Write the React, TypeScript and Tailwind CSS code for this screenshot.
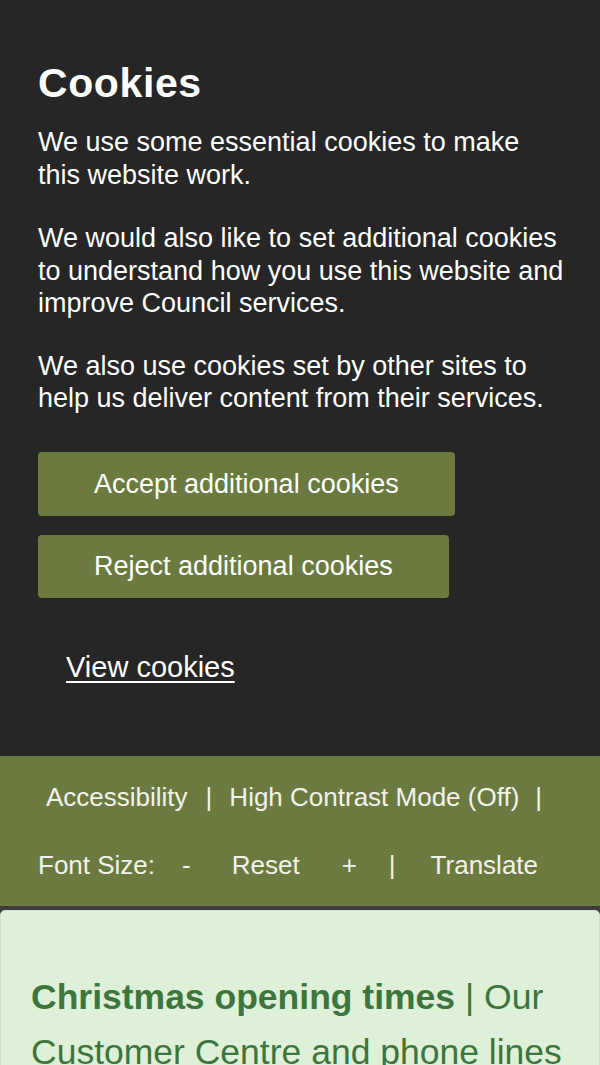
export default function App() {
  const font = { fontFamily: '"Liberation Sans", Arial, sans-serif' };

  return (
    <div className="min-h-[1065px] w-[600px] bg-[#3d3d3d] text-white" style={font}>
      {/* cookie banner */}
      <div className="bg-[#262626] pl-[38px] pr-[34px] pt-[60px] pb-[72px]">
        <h2 className="mb-[20px] text-[41px] font-bold leading-[46px] tracking-[0.6px]">Cookies</h2>
        <p className="mb-[31px] text-[27px] leading-[32.5px]">
          We use some essential cookies to make this website work.
        </p>
        <p className="mb-[30px] text-[27px] leading-[32.5px]">
          We would also like to set additional cookies to understand how you use this website and improve Council services.
        </p>
        <p className="text-[27px] leading-[32.5px]">
          We also use cookies set by other sites to help us deliver content from their services.
        </p>

        <div className="mt-[37px] flex flex-col items-start gap-[19px]">
          <button className="rounded-[4px] bg-[#6b7b40] px-[56px] py-[16px] text-[27px] leading-[32.5px] text-white">
            Accept additional cookies
          </button>
          <button className="rounded-[4px] bg-[#6b7b40] px-[56px] py-[15px] text-[27px] leading-[32.5px] text-white">
            Reject additional cookies
          </button>
        </div>

        <a href="#" className="ml-[28px] mt-[53px] inline-block text-[29px] leading-[33px] underline underline-offset-[4px]">
          View cookies
        </a>
      </div>

      {/* accessibility bar */}
      <nav className="bg-[#6b7b40] pt-[26px] pb-[26px] text-[26px] leading-[30px] text-[#f2f2ec]">
        <div className="flex items-center pl-[46px]">
          <a href="#">Accessibility</a>
          <span className="ml-[18px]">|</span>
          <a href="#" className="ml-[17px]">High Contrast Mode (Off)</a>
          <span className="ml-[16px]">|</span>
        </div>
        <div className="mt-[38px] flex items-center pl-[38px]">
          <span>Font Size:</span>
          <a href="#" className="ml-[27px]">-</a>
          <a href="#" className="ml-[41px]">Reset</a>
          <a href="#" className="ml-[42px]">+</a>
          <span className="ml-[32px]">|</span>
          <a href="#" className="ml-[35px]">Translate</a>
        </div>
      </nav>

      {/* notice */}
      <div className="pt-[4px]">
        <div className="rounded-[5px] border border-[#cfe3c4] bg-[#dff0d8] pl-[30px] pr-[24px] pt-[59px] pb-[40px] text-[35.5px] leading-[55px] text-[#3c763d]">
          <strong>Christmas opening times</strong> | Our Customer Centre and phone lines will close at 1pm on Christmas Eve and reopen on 2 January.
        </div>
      </div>
    </div>
  );
}
